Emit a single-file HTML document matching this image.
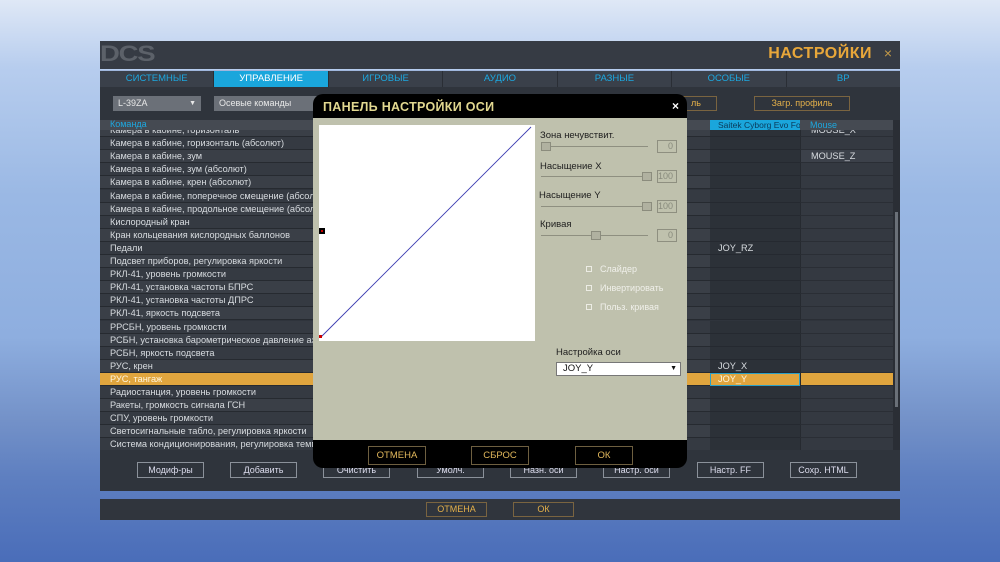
<!DOCTYPE html><html><head><meta charset="utf-8"><style>
*{margin:0;padding:0;box-sizing:border-box}
body{width:1000px;height:562px;overflow:hidden;position:relative;font-family:"Liberation Sans","DejaVu Sans",sans-serif;font-size:9px;color:#d8dce0;
background:linear-gradient(180deg,#dfe8f6 0%,#b7cdee 12%,#9ab8e4 35%,#8eaedf 60%,#7391c8 75%,#5e7fc0 85%,#4a6db9 100%)}
.a{position:absolute}
.hdr{left:100px;top:41px;width:800px;height:28px;background:#363b44}
.tabs{left:100px;top:70px;width:800px;height:17px;background:#3a404a;display:flex;border-top:1px solid #9fb6dd}
.tabs div{flex:1;text-align:center;color:#1da8e0;line-height:15px;font-size:9.5px;border-right:1px solid #2a2e35}
.tabs .on{background:#1aa6dc;color:#fff}
.main{left:100px;top:87px;width:800px;height:404px;background:#2f343c}
.dd{height:15px;background:#6b7078;color:#e8e8e8;line-height:15px;padding-left:5px}
.row{position:absolute;left:0;width:793px;height:13.1px;line-height:13px;border-bottom:1px solid #262a30;font-size:9.2px}
.row span{position:absolute;left:10px}
.c1{position:absolute;left:610px;width:90px;top:0;height:13px;background:#2c3138;border-bottom:1px solid #252930}
.c2{position:absolute;left:700px;width:93px;top:0;height:13px;background:#343941;border-left:1px solid #262a30;border-bottom:1px solid #2a2e35}
.btn{position:absolute;height:16px;border:1px solid #8b919a;background:#2f343c;color:#dde;text-align:center;line-height:14px;font-size:9px}
.obtn{position:absolute;border:1px solid #7a6440;color:#e4b04a;text-align:center;font-size:9px}
.dlg{left:313px;top:94px;width:374px;height:374px;background:#000;border-radius:10px}
.lab{position:absolute;color:#1e1e1e;font-size:9.5px}
.sl{position:absolute;height:1px;background:#8e8f80;width:107px}
.kn{position:absolute;width:10px;height:9px;border:1px solid #8b8c7d;background:#b0b1a0}
.vb{position:absolute;width:20px;height:13px;border:1px solid #8e8f80;color:#888a7c;text-align:right;padding-right:3px;font-size:9px;line-height:11px}
.cb{position:absolute;width:6px;height:6px;border:1px solid #ecece4}
.ct{position:absolute;color:#f0f0ea;font-size:9px}
.db{position:absolute;top:352px;height:19px;width:58px;border:1px solid #6e5f40;color:#e2b85c;text-align:center;line-height:17px;font-size:9.5px}
</style></head><body>
<div class="a hdr">
<div class="a" style="left:0px;top:2px;font:bold 22px 'Liberation Sans',sans-serif;color:#5c6169;letter-spacing:-1px;line-height:22px;transform:scaleX(1.25);transform-origin:left">DCS</div>
<div class="a" style="right:28px;top:4px;font-weight:bold;font-size:16px;color:#e8a73a;letter-spacing:.5px">НАСТРОЙКИ</div>
<div class="a" style="right:8px;top:4px;font-size:14px;color:#c49a48">×</div>
</div>
<div class="a tabs"><div>СИСТЕМНЫЕ</div><div class="on">УПРАВЛЕНИЕ</div><div>ИГРОВЫЕ</div><div>АУДИО</div><div>РАЗНЫЕ</div><div>ОСОБЫЕ</div><div style="border:0">ВР</div></div>
<div class="a main">
<div class="a dd" style="left:13px;top:9px;width:88px">L-39ZA<span style="position:absolute;right:5px;font-size:7px">▼</span></div>
<div class="a dd" style="left:114px;top:9px;width:110px">Осевые команды</div>
<div class="obtn" style="left:575px;top:9px;width:42px;height:15px;line-height:13px">ль</div>
<div class="obtn" style="left:654px;top:9px;width:96px;height:15px;line-height:13px">Загр. профиль</div>
<div class="a" style="left:0;top:33px;width:793px;height:10px;background:#454a52"></div>
<div class="a" style="left:10px;top:32px;color:#1da8e0;font-size:9px">Команда</div>
<div class="a" style="left:610px;top:33px;width:90px;height:10px;background:#1aa6dc;color:#0a3a5a;font-size:8.5px;line-height:10px;padding-left:8px;white-space:nowrap;overflow:hidden">Saitek Cyborg Evo Force</div>
<div class="a" style="left:710px;top:33px;color:#1da8e0;font-size:9px;line-height:10px">Mouse</div>
<div class="a" style="left:793px;top:33px;width:7px;height:330px;background:#2a2e35"></div>
<div class="a" style="left:795px;top:125px;width:3px;height:195px;background:#6a7078"></div>
<div class="a" style="left:0;top:43px;width:793px;height:320px;overflow:hidden">
<div class="a" style="left:0;top:-6px;width:793px">
<div class="row" style="top:0;background:#3a3f47"><span>Камера в кабине, горизонталь</span><div class="c1"></div><div class="c2"><span style="left:10px">MOUSE_X</span></div></div>
<div class="row" style="top:13.1px;background:#353a42"><span>Камера в кабине, горизонталь (абсолют)</span><div class="c1"></div><div class="c2"></div></div>
<div class="row" style="top:26.2px;background:#3a3f47"><span>Камера в кабине, зум</span><div class="c1"></div><div class="c2" style="background:#3c414a"><span style="left:10px">MOUSE_Z</span></div></div>
<div class="row" style="top:39.3px;background:#353a42"><span>Камера в кабине, зум (абсолют)</span><div class="c1"></div><div class="c2"></div></div>
<div class="row" style="top:52.4px;background:#3a3f47"><span>Камера в кабине, крен (абсолют)</span><div class="c1"></div><div class="c2"></div></div>
<div class="row" style="top:65.5px;background:#353a42"><span>Камера в кабине, поперечное смещение (абсолют)</span><div class="c1"></div><div class="c2"></div></div>
<div class="row" style="top:78.6px;background:#3a3f47"><span>Камера в кабине, продольное смещение (абсолют)</span><div class="c1"></div><div class="c2"></div></div>
<div class="row" style="top:91.7px;background:#353a42"><span>Кислородный кран</span><div class="c1"></div><div class="c2"></div></div>
<div class="row" style="top:104.8px;background:#3a3f47"><span>Кран кольцевания кислородных баллонов</span><div class="c1"></div><div class="c2"></div></div>
<div class="row" style="top:117.9px;background:#353a42"><span>Педали</span><div class="c1"><span style="left:8px">JOY_RZ</span></div><div class="c2"></div></div>
<div class="row" style="top:131px;background:#3a3f47"><span>Подсвет приборов, регулировка яркости</span><div class="c1"></div><div class="c2"></div></div>
<div class="row" style="top:144.1px;background:#353a42"><span>РКЛ-41, уровень громкости</span><div class="c1"></div><div class="c2"></div></div>
<div class="row" style="top:157.2px;background:#3a3f47"><span>РКЛ-41, установка частоты БПРС</span><div class="c1"></div><div class="c2"></div></div>
<div class="row" style="top:170.3px;background:#353a42"><span>РКЛ-41, установка частоты ДПРС</span><div class="c1"></div><div class="c2"></div></div>
<div class="row" style="top:183.4px;background:#3a3f47"><span>РКЛ-41, яркость подсвета</span><div class="c1"></div><div class="c2"></div></div>
<div class="row" style="top:196.5px;background:#353a42"><span>РРСБН, уровень громкости</span><div class="c1"></div><div class="c2"></div></div>
<div class="row" style="top:209.6px;background:#3a3f47"><span>РСБН, установка барометрическое давление аэродрома</span><div class="c1"></div><div class="c2"></div></div>
<div class="row" style="top:222.7px;background:#353a42"><span>РСБН, яркость подсвета</span><div class="c1"></div><div class="c2"></div></div>
<div class="row" style="top:235.8px;background:#3a3f47"><span>РУС, крен</span><div class="c1"><span style="left:8px">JOY_X</span></div><div class="c2"></div></div>
<div class="row" style="top:248.9px;background:#e0a53e;color:#fff5dc"><span>РУС, тангаж</span><div class="c1" style="background:#e0a53e;border:1px solid #2aa0c8"><span style="left:7px;line-height:11px">JOY_Y</span></div><div class="c2" style="background:#e0a53e"></div></div>
<div class="row" style="top:262px;background:#353a42"><span>Радиостанция, уровень громкости</span><div class="c1"></div><div class="c2"></div></div>
<div class="row" style="top:275.1px;background:#3a3f47"><span>Ракеты, громкость сигнала ГСН</span><div class="c1"></div><div class="c2"></div></div>
<div class="row" style="top:288.2px;background:#353a42"><span>СПУ, уровень громкости</span><div class="c1"></div><div class="c2"></div></div>
<div class="row" style="top:301.3px;background:#3a3f47"><span>Светосигнальные табло, регулировка яркости</span><div class="c1"></div><div class="c2"></div></div>
<div class="row" style="top:314.4px;background:#353a42"><span>Система кондиционирования, регулировка температуры</span><div class="c1"></div><div class="c2"></div></div>
</div></div>
<div class="btn" style="left:37px;top:375px;width:67px">Модиф-ры</div>
<div class="btn" style="left:130px;top:375px;width:67px">Добавить</div>
<div class="btn" style="left:223px;top:375px;width:67px">Очистить</div>
<div class="btn" style="left:317px;top:375px;width:67px">Умолч.</div>
<div class="btn" style="left:410px;top:375px;width:67px">Назн. оси</div>
<div class="btn" style="left:503px;top:375px;width:67px">Настр. оси</div>
<div class="btn" style="left:597px;top:375px;width:67px">Настр. FF</div>
<div class="btn" style="left:690px;top:375px;width:67px">Сохр. HTML</div>
</div>
<div class="a" style="left:100px;top:499px;width:800px;height:21px;background:#30353d">
<div class="obtn" style="left:326px;top:3px;width:61px;height:15px;line-height:13px">ОТМЕНА</div>
<div class="obtn" style="left:413px;top:3px;width:61px;height:15px;line-height:13px">ОК</div>
</div>
<div class="a dlg">
<div class="a" style="left:10px;top:6px;font-weight:bold;font-size:12.5px;color:#e2d890;letter-spacing:.3px">ПАНЕЛЬ НАСТРОЙКИ ОСИ</div>
<div class="a" style="right:8px;top:5px;font-size:12px;color:#fff;font-weight:bold">×</div>
<div class="a" style="left:0;top:24px;width:374px;height:322px;background:#bfc1ad">
<div class="a" style="left:6px;top:7px;width:216px;height:216px;background:#fff"></div>
<svg class="a" style="left:6px;top:7px" width="216" height="216"><line x1="2" y1="212" x2="212" y2="2" stroke="#3a3ab0" stroke-width="0.9"/><rect x="0" y="210" width="3" height="3" fill="#c00"/></svg>
<div class="a" style="left:6px;top:110px;width:6px;height:6px;background:#000"><div style="margin:2px;width:2px;height:2px;background:#c00"></div></div>
<div class="lab" style="left:227px;top:12px">Зона нечувствит.</div>
<div class="sl" style="left:228px;top:28px"></div><div class="kn" style="left:228px;top:24px"></div>
<div class="vb" style="left:344px;top:22px">0</div>
<div class="lab" style="left:227px;top:43px">Насыщение X</div>
<div class="sl" style="left:228px;top:58px"></div><div class="kn" style="left:329px;top:54px"></div>
<div class="vb" style="left:344px;top:52px">100</div>
<div class="lab" style="left:226px;top:72px">Насыщение Y</div>
<div class="sl" style="left:228px;top:88px"></div><div class="kn" style="left:329px;top:84px"></div>
<div class="vb" style="left:344px;top:82px">100</div>
<div class="lab" style="left:227px;top:101px">Кривая</div>
<div class="sl" style="left:228px;top:117px"></div><div class="kn" style="left:278px;top:113px"></div>
<div class="vb" style="left:344px;top:111px">0</div>
<div class="cb" style="left:273px;top:148px"></div><div class="ct" style="left:287px;top:146px">Слайдер</div>
<div class="cb" style="left:273px;top:167px"></div><div class="ct" style="left:287px;top:165px">Инвертировать</div>
<div class="cb" style="left:273px;top:186px"></div><div class="ct" style="left:287px;top:184px">Польз. кривая</div>
<div class="lab" style="left:243px;top:229px">Настройка оси</div>
<div class="a" style="left:243px;top:244px;width:125px;height:14px;background:#fff;border:1px solid #777;color:#111;font-size:9.5px;line-height:12px;padding-left:6px">JOY_Y<span style="position:absolute;right:3px;font-size:7px">▼</span></div>
</div>
<div class="db" style="left:55px">ОТМЕНА</div>
<div class="db" style="left:158px">СБРОС</div>
<div class="db" style="left:262px">ОК</div>
</div>
</body></html>
